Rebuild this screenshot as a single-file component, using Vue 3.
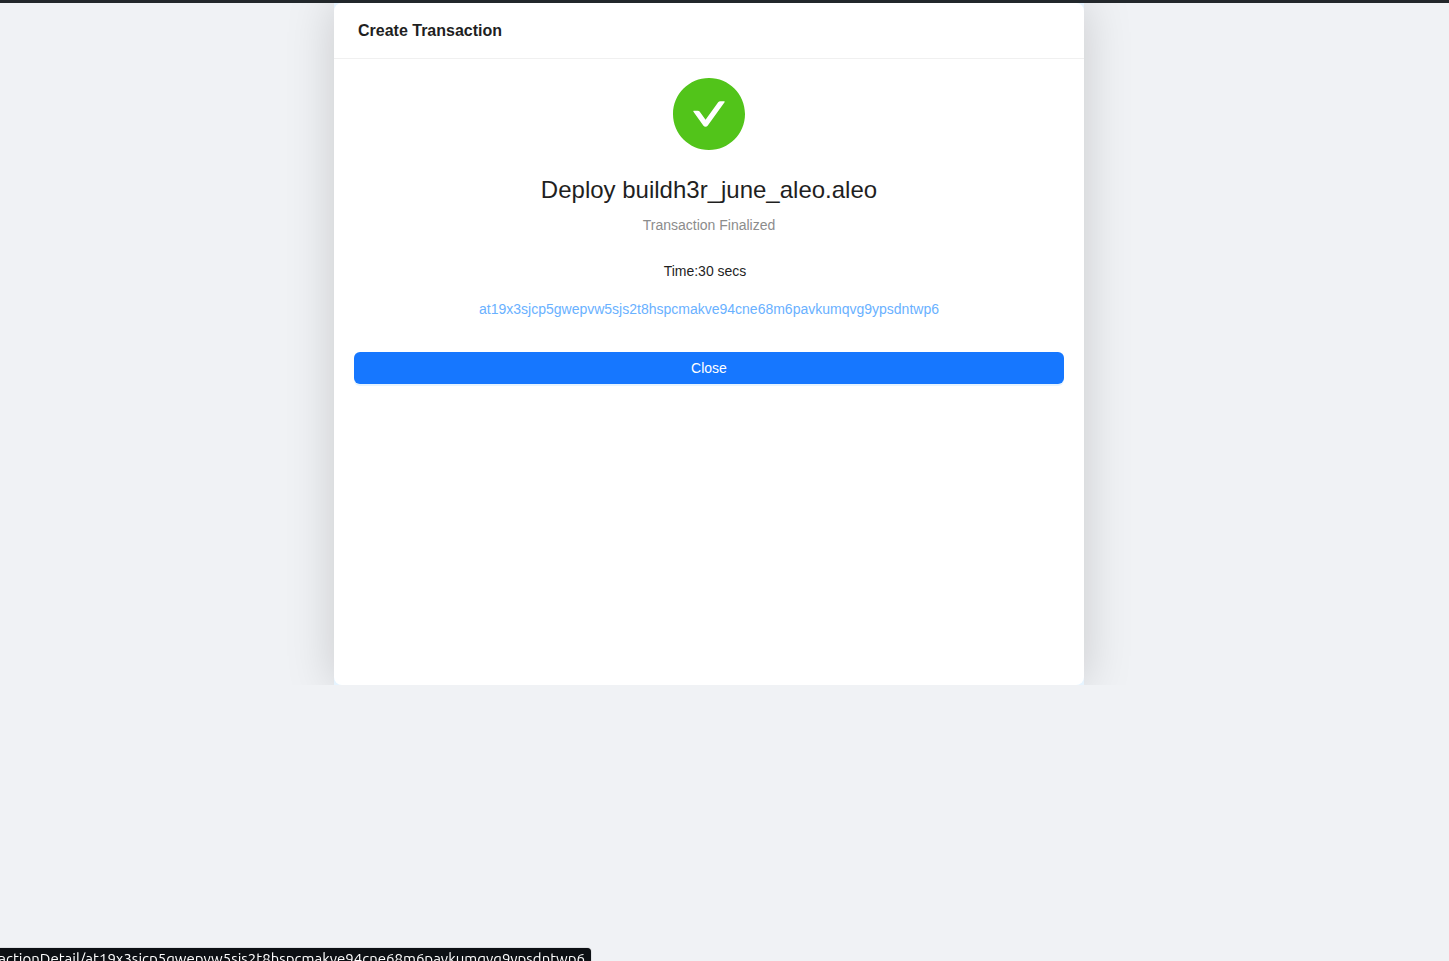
<script setup>
const txId = 'at19x3sjcp5gwepvw5sjs2t8hspcmakve94cne68m6pavkumqvg9ypsdntwp6'
</script>

<template>
  <div class="page">
    <div class="top-edge"></div>
    <div class="stage">
      <div class="shell">
        <main class="card">
          <header class="card-head">
            <h1>Create Transaction</h1>
          </header>
          <section class="card-body">
            <svg class="status-icon" viewBox="64 64 896 896" role="img" aria-label="Success">
              <path d="M512 64C264.6 64 64 264.6 64 512s200.6 448 448 448 448-200.6 448-448S759.4 64 512 64zm193.5 301.7l-210.6 292a31.8 31.8 0 01-51.7 0L318.5 484.9c-3.8-5.3 0-12.7 6.5-12.7h46.9c10.2 0 19.9 4.9 25.9 13.3l71.2 98.8 157.2-218c6-8.3 15.6-13.3 25.9-13.3H699c6.5 0 10.3 7.4 6.5 12.7z" />
            </svg>
            <h2>Deploy buildh3r_june_aleo.aleo</h2>
            <p class="subtitle">Transaction Finalized</p>
            <p class="time">Time:30 secs</p>
            <a class="tx-link" href="#">{{ txId }}</a>
            <button class="close" type="button">Close</button>
          </section>
        </main>
      </div>
    </div>
    <div class="link-status"><span>actionDetail/{{ txId }}</span></div>
  </div>
</template>

<style>
body {
  background: #f0f2f5;
}
</style>

<style scoped>
.page {
  min-height: 100vh;
  background: #f0f2f5;
  color: #1f1f1f;
  font-family: "Liberation Sans", Arial, sans-serif;
  font-size: 14px;
  line-height: 22px;
}

.top-edge {
  height: 3px;
  background: #22272b;
}

.stage {
  display: flex;
  justify-content: center;
  padding-right: 31px;
  overflow: hidden;
}

.shell {
  display: flex;
  width: 100%;
  max-width: 750px;
  min-height: 682px;
  background: #e6f4ff;
  box-shadow: 0 0 45px rgba(0, 0, 0, 0.17);
}

.card {
  flex: 1;
  min-width: 0;
  background: #fff;
  border-radius: 8px;
}

.card-head {
  display: flex;
  align-items: center;
  min-height: 55px;
  padding: 0 24px;
  border-bottom: 1px solid #f0f0f0;
}

h1 {
  margin: 0;
  font-size: 16px;
  font-weight: 600;
  line-height: 24px;
}

.card-body {
  display: flex;
  flex-direction: column;
  align-items: center;
  padding: 19px 20px;
  text-align: center;
}

.status-icon {
  width: 72px;
  height: 72px;
  fill: #52c41a;
}

h2 {
  margin: 24px 0 8px;
  font-size: 24px;
  font-weight: 400;
  line-height: 32px;
}

.subtitle {
  margin: 0;
  color: #8c8c8c;
}

.time {
  margin: 24px 8px 16px 0;
}

.tx-link {
  max-width: 100%;
  overflow-wrap: anywhere;
  color: #69b1ff;
  text-decoration: none;
}

.close {
  align-self: stretch;
  height: 32px;
  margin-top: 32px;
  padding: 0 16px;
  border: 0;
  border-radius: 6px;
  background: #1677ff;
  box-shadow: 0 2px 0 rgba(5, 145, 255, 0.1);
  color: #fff;
  font: inherit;
  cursor: pointer;
}

.link-status {
  position: fixed;
  bottom: 0;
  left: 0;
  display: flex;
  justify-content: flex-end;
  box-sizing: border-box;
  width: 591px;
  max-width: 100%;
  height: 13px;
  padding-right: 6px;
  overflow: hidden;
  border-radius: 0 4px 0 0;
  background: #0d1014;
  box-shadow: 0 0 1px #555;
  color: #fff;
  font-family: Ubuntu, Roboto, sans-serif;
  font-size: 15px;
  line-height: 22px;
  white-space: nowrap;
}
</style>
